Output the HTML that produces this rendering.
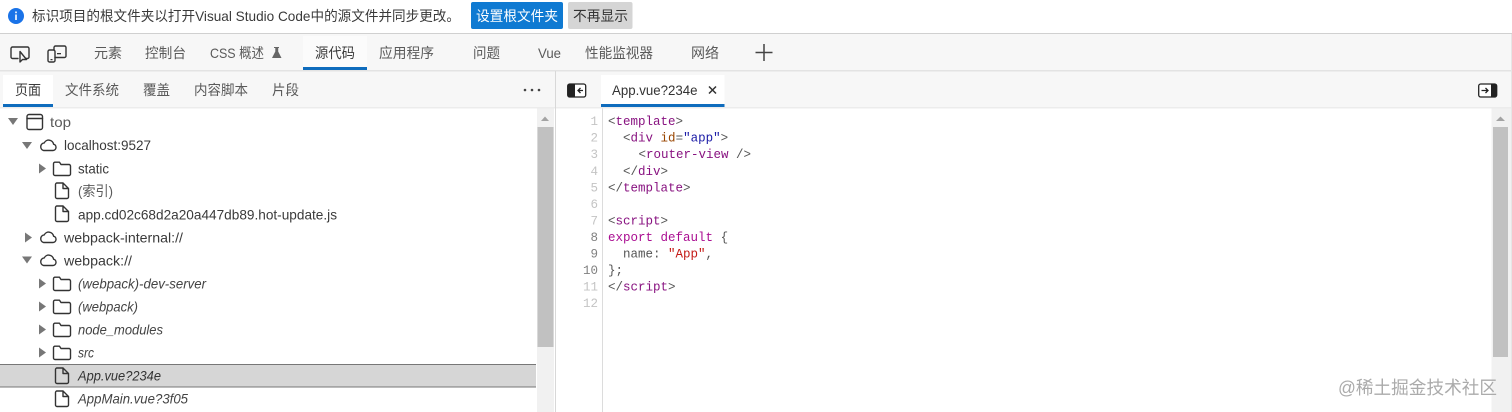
<!DOCTYPE html>
<html><head><meta charset="utf-8"><style>
html,body{margin:0;padding:0;background:#fff;width:1512px;height:412px;overflow:hidden}
svg{display:block;filter:blur(.3px)}
text{font-family:"Liberation Sans","Noto Sans CJK SC",sans-serif;font-size:14px;fill:#5a5a5a}
.d{fill:#3a3a3a}
.i{font-style:italic;fill:#444}
.t{fill:#333;font-size:14px}
.m{font-family:"Liberation Mono","Noto Sans CJK SC",monospace;font-size:12.5px;fill:#303942}
.n{font-family:"Liberation Mono",monospace;font-size:12.5px;fill:#c4c4c4;text-anchor:end}
.tag{fill:#881280}.attr{fill:#994500}.val{fill:#1a1aa6}.kw{fill:#aa0d91}.str{fill:#c41a16}.pu{fill:#555}
.ic{fill:none;stroke:#333;stroke-width:1.4;stroke-linejoin:round;stroke-linecap:round}
</style></head><body>
<svg width="1512" height="412" viewBox="0 0 1512 412" xmlns="http://www.w3.org/2000/svg">
<defs>
<g id="folder"><path class="ic" d="M0.5 3V12.500a1.500 1.500 0 0 0 1.500 1.500H16a1.500 1.500 0 0 0 1.500-1.500V4.500A1.500 1.500 0 0 0 16 3H8L6.500 0.700H2A1.500 1.500 0 0 0 0.500 2.200V3"/></g>
<g id="file"><path class="ic" d="M1.500 2a1.500 1.500 0 0 1 1.500-1.500H9L14.500 6V14.500a1.500 1.500 0 0 1-1.500 1.500H3A1.500 1.500 0 0 1 1.500 14.500ZM9 .5V6H14.500"/></g>
<g id="cloud"><path class="ic" d="M4.500 12.500H14a3.200 3.200 0 0 0 .6-6.300A5 5 0 0 0 5.200 4.900 3.900 3.900 0 0 0 4.500 12.500Z"/></g>
<path id="down" d="M0 0H10L5 7Z" fill="#777"/>
<path id="right" d="M0 0L7 5 0 10Z" fill="#777"/>
</defs>

<!-- top notification bar -->
<rect width="1512" height="33" fill="#fff"/>
<rect y="33" width="1512" height="1" fill="#d0d0d0"/>
<circle cx="16" cy="16" r="8" fill="#1a73e8"/>
<rect x="15.200" y="14.500" width="1.600" height="5.500" fill="#fff"/><rect x="15.200" y="11.500" width="1.600" height="1.700" fill="#fff"/>
<text x="32" y="21" class="d" textLength="428" lengthAdjust="spacingAndGlyphs">标识项目的根文件夹以打开Visual Studio Code中的源文件并同步更改。</text>
<rect x="471" y="2" width="92" height="27" rx="2" fill="#0f7ad2"/>
<text x="476" y="21" style="fill:#fff" textLength="82" lengthAdjust="spacingAndGlyphs">设置根文件夹</text>
<rect x="568" y="2" width="64.500" height="27" rx="2" fill="#d5d5d5"/>
<text x="573" y="21" style="fill:#333" textLength="55" lengthAdjust="spacingAndGlyphs">不再显示</text>

<!-- main toolbar -->
<rect y="34" width="1512" height="36" fill="#f7f7f7"/>
<rect y="70" width="1512" height="1.500" fill="#e3e3e3"/>
<path class="ic" d="M18 58.500H12.500a1.500 1.500 0 0 1-1.500-1.500V48.500a1.500 1.500 0 0 1 1.500-1.500H27.500a1.500 1.500 0 0 1 1.500 1.500V57a1.500 1.500 0 0 1-1.500 1.500H26"/>
<path class="ic" d="M20 51.500V62L22.500 59.500H26.500Z"/>
<path class="ic" d="M54 50V47.500a1.500 1.500 0 0 1 1.500-1.500H64.500a1.500 1.500 0 0 1 1.500 1.500V56a1.500 1.500 0 0 1-1.500 1.500H55"/>
<rect class="ic" x="48" y="50" width="7" height="12" rx="1.500"/>
<rect x="57" y="53" width="4" height="1.300" fill="#333"/>
<rect x="50.500" y="59" width="2" height="1.200" fill="#333"/>

<text x="94" y="58" textLength="28" lengthAdjust="spacingAndGlyphs">元素</text>
<text x="145" y="58" textLength="41" lengthAdjust="spacingAndGlyphs">控制台</text>
<text x="210" y="58" textLength="54" lengthAdjust="spacingAndGlyphs">CSS 概述</text>
<path d="M274 47H279V48H278.200V51.500L281.500 58H272L275.300 51.500V48H274Z" fill="#666"/>
<rect x="303" y="36" width="64" height="31" fill="#fbfbfb"/>
<text x="315" y="58" textLength="40" lengthAdjust="spacingAndGlyphs" class="d">源代码</text>
<rect x="303" y="67" width="64" height="3" fill="#0f6cbd"/>
<text x="379" y="58" textLength="55" lengthAdjust="spacingAndGlyphs">应用程序</text>
<text x="473" y="58" textLength="27" lengthAdjust="spacingAndGlyphs">问题</text>
<text x="538" y="58" textLength="23" lengthAdjust="spacingAndGlyphs">Vue</text>
<text x="585" y="58" textLength="68" lengthAdjust="spacingAndGlyphs">性能监视器</text>
<text x="691" y="58" textLength="28" lengthAdjust="spacingAndGlyphs">网络</text>
<path d="M755.500 52.500H772.500M764 44V61" stroke="#444" stroke-width="1.500" fill="none"/>

<!-- second row -->
<rect y="71.500" width="555" height="36" fill="#f7f7f7"/>
<rect x="556" y="71.500" width="956" height="36" fill="#f7f7f7"/>
<rect y="107" width="1512" height="1.500" fill="#ececec"/>
<rect x="555" y="71" width="1" height="341" fill="#d8d8d8"/>
<rect x="3" y="75" width="50" height="29" fill="#fff"/>
<rect x="3" y="104" width="50" height="3" fill="#0f6cbd"/>
<text x="15" y="95" textLength="26" lengthAdjust="spacingAndGlyphs" class="d">页面</text>
<text x="65" y="95" textLength="54" lengthAdjust="spacingAndGlyphs">文件系统</text>
<text x="143" y="95" textLength="27" lengthAdjust="spacingAndGlyphs">覆盖</text>
<text x="194" y="95" textLength="54" lengthAdjust="spacingAndGlyphs">内容脚本</text>
<text x="272" y="95" textLength="27" lengthAdjust="spacingAndGlyphs">片段</text>
<circle cx="525" cy="90" r="1.300" fill="#444"/><circle cx="532" cy="90" r="1.300" fill="#444"/><circle cx="539" cy="90" r="1.300" fill="#444"/>

<!-- panel toggle left -->
<rect x="567.700" y="84" width="18" height="13" rx="2" fill="#fff" stroke="#222" stroke-width="1.300"/>
<path d="M569 84.500H575V96.500H569A1.500 1.500 0 0 1 567.500 95V86A1.500 1.500 0 0 1 569 84.500Z" fill="#222"/>
<path d="M583 90.500H578M580.500 88L578 90.500 580.500 93" stroke="#222" stroke-width="1.300" fill="none"/>

<rect x="601" y="75" width="123.500" height="29" fill="#fff"/>
<rect x="601" y="104" width="123.500" height="3" fill="#0f6cbd"/>
<text x="612" y="95" textLength="85.500" lengthAdjust="spacingAndGlyphs" class="t">App.vue?234e</text>
<path d="M709 86.500L716 93.500M716 86.500L709 93.500" stroke="#333" stroke-width="1.500"/>

<!-- panel toggle right -->
<rect x="1478.700" y="84" width="18" height="13" rx="2" fill="#fff" stroke="#222" stroke-width="1.300"/>
<path d="M1491 84.500H1495A1.500 1.500 0 0 1 1496.500 86V95A1.500 1.500 0 0 1 1495 96.500H1491Z" fill="#222"/>
<path d="M1481.500 90.500H1488M1485.500 88L1488 90.500 1485.500 93" stroke="#222" stroke-width="1.300" fill="none"/>

<!-- left tree -->
<path d="M8 118H18L13 125Z" fill="#777"/>
<rect class="ic" x="27" y="114.500" width="15.500" height="15" rx="2"/>
<path class="ic" d="M27 118.500H42.500"/>
<text x="50" y="127" textLength="21" lengthAdjust="spacingAndGlyphs">top</text>

<use href="#down" x="22" y="142"/>
<use href="#cloud" x="39" y="138"/>
<text x="64" y="150" textLength="87" lengthAdjust="spacingAndGlyphs" class="d">localhost:9527</text>

<use href="#right" x="39" y="163.500"/>
<use href="#folder" x="53" y="161.500"/>
<text x="78" y="173.500" textLength="31" lengthAdjust="spacingAndGlyphs" class="d">static</text>

<use href="#file" x="54" y="182.500"/>
<text x="78" y="196" textLength="35" lengthAdjust="spacingAndGlyphs">(索引)</text>

<use href="#file" x="54" y="205.500"/>
<text x="78" y="219.500" textLength="259" lengthAdjust="spacingAndGlyphs" class="d">app.cd02c68d2a20a447db89.hot-update.js</text>

<use href="#right" x="25" y="232.500"/>
<use href="#cloud" x="39" y="230"/>
<text x="64" y="242.500" textLength="119" lengthAdjust="spacingAndGlyphs" class="d">webpack-internal://</text>

<use href="#down" x="22" y="256.500"/>
<use href="#cloud" x="39" y="253"/>
<text x="64" y="265.500" textLength="68" lengthAdjust="spacingAndGlyphs" class="d">webpack://</text>

<use href="#right" x="39" y="278.500"/>
<use href="#folder" x="53" y="276.500"/>
<text x="78" y="288.500" textLength="128" lengthAdjust="spacingAndGlyphs" class="i">(webpack)-dev-server</text>

<use href="#right" x="39" y="301.500"/>
<use href="#folder" x="53" y="299.500"/>
<text x="78" y="311.500" textLength="60" lengthAdjust="spacingAndGlyphs" class="i">(webpack)</text>

<use href="#right" x="39" y="324.500"/>
<use href="#folder" x="53" y="322.500"/>
<text x="78" y="334.500" textLength="85" lengthAdjust="spacingAndGlyphs" class="i">node_modules</text>

<use href="#right" x="39" y="347.500"/>
<use href="#folder" x="53" y="345.500"/>
<text x="78" y="357.500" textLength="16" lengthAdjust="spacingAndGlyphs" class="i">src</text>

<rect x="0" y="364" width="536" height="23" fill="#d6d6d6"/>
<rect x="0" y="364" width="536" height="1" fill="#777"/>
<rect x="0" y="386.500" width="536" height="1" fill="#777"/>
<use href="#file" x="54" y="367.500"/>
<text x="78" y="380.500" textLength="83" lengthAdjust="spacingAndGlyphs" class="i" style="fill:#333">App.vue?234e</text>

<use href="#file" x="54" y="390.500"/>
<text x="78" y="403.500" textLength="110" lengthAdjust="spacingAndGlyphs" class="i">AppMain.vue?3f05</text>

<!-- left scrollbar -->
<rect x="537" y="108.500" width="17" height="304" fill="#f1f1f1"/>
<rect x="537.500" y="127" width="16" height="220" fill="#c1c1c1"/>
<path d="M541 121L545 116.500 549 121Z" fill="#a3a3a3"/>

<!-- code editor -->
<rect x="602" y="108.500" width="1" height="304" fill="#dcdcdc"/>
<g>
<text class="n" x="598" y="125">1</text>
<text class="n" x="598" y="141.500">2</text>
<text class="n" x="598" y="158">3</text>
<text class="n" x="598" y="175">4</text>
<text class="n" x="598" y="191.500">5</text>
<text class="n" x="598" y="208">6</text>
<text class="n" x="598" y="224.500">7</text>
<text class="n" x="598" y="241" style="fill:#808080">8</text>
<text class="n" x="598" y="257.500" style="fill:#808080">9</text>
<text class="n" x="598" y="274" style="fill:#808080">10</text>
<text class="n" x="598" y="290.500">11</text>
<text class="n" x="598" y="307">12</text>
</g>
<text class="m" xml:space="preserve" x="608" y="125"><tspan class="pu">&lt;</tspan><tspan class="tag">template</tspan><tspan class="pu">&gt;</tspan></text>
<text class="m" xml:space="preserve" x="623" y="141.500"><tspan class="pu">&lt;</tspan><tspan class="tag">div</tspan> <tspan class="attr">id</tspan><tspan class="pu">=</tspan><tspan class="val">"app"</tspan><tspan class="pu">&gt;</tspan></text>
<text class="m" xml:space="preserve" x="638.500" y="158"><tspan class="pu">&lt;</tspan><tspan class="tag">router-view</tspan> <tspan class="pu">/&gt;</tspan></text>
<text class="m" xml:space="preserve" x="623" y="175"><tspan class="pu">&lt;/</tspan><tspan class="tag">div</tspan><tspan class="pu">&gt;</tspan></text>
<text class="m" xml:space="preserve" x="608" y="191.500"><tspan class="pu">&lt;/</tspan><tspan class="tag">template</tspan><tspan class="pu">&gt;</tspan></text>
<text class="m" xml:space="preserve" x="608" y="224.500"><tspan class="pu">&lt;</tspan><tspan class="tag">script</tspan><tspan class="pu">&gt;</tspan></text>
<text class="m" xml:space="preserve" x="608" y="241"><tspan class="kw">export</tspan> <tspan class="kw">default</tspan> <tspan class="pu">{</tspan></text>
<text class="m" xml:space="preserve" x="623" y="257.500"><tspan class="pu">name:</tspan> <tspan class="str">"App"</tspan><tspan class="pu">,</tspan></text>
<text class="m" xml:space="preserve" x="608" y="274"><tspan class="pu">};</tspan></text>
<text class="m" xml:space="preserve" x="608" y="290.500"><tspan class="pu">&lt;/</tspan><tspan class="tag">script</tspan><tspan class="pu">&gt;</tspan></text>

<!-- right scrollbar -->
<rect x="1491.500" y="108.500" width="19.500" height="304" fill="#f1f1f1"/>
<rect x="1493" y="127" width="15" height="230" fill="#c1c1c1"/>
<path d="M1496 121L1500.500 116.500 1505 121Z" fill="#a3a3a3"/>
<rect x="1511" y="34" width="1" height="378" fill="#e6e6e6"/>

<!-- watermark -->
<text x="1338" y="394" textLength="159" lengthAdjust="spacingAndGlyphs" style="font-size:18px;fill:#ababab">@稀土掘金技术社区</text>
</svg>
</body></html>
